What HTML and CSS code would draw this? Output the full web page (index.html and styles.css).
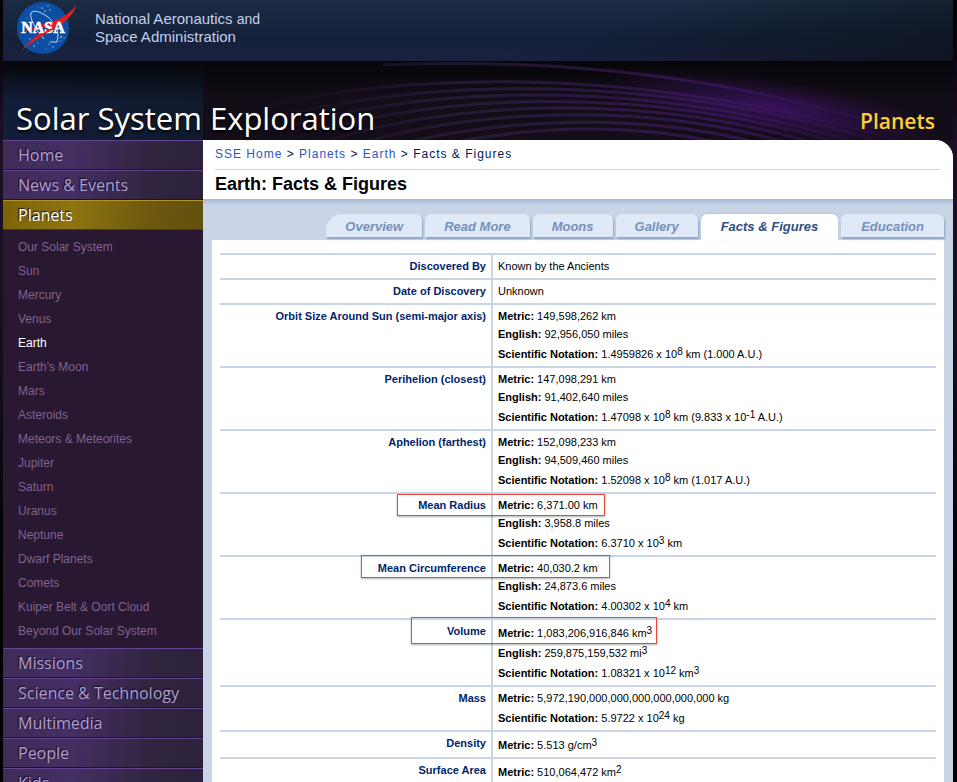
FILE: index.html
```html
<!DOCTYPE html>
<html lang="en">
<head>
  <meta charset="UTF-8">
  <title>Solar System Exploration: Planets: Earth: Facts &amp; Figures</title>
  <link rel="stylesheet" href="styles.css">
</head>
<body>
<div class="page">
  <header>
    <div class="agency">
      <svg class="logo" viewBox="0 0 64 54" role="img" aria-label="NASA logo">
        <circle cx="29" cy="28" r="26" fill="#0b4ea2"/>
        <g fill="#a9cdf0">
          <circle cx="28" cy="8" r=".8"/><circle cx="34" cy="6" r=".7"/><circle cx="31" cy="11" r=".8"/>
          <circle cx="36" cy="10" r=".7"/><circle cx="24" cy="7" r=".5"/><circle cx="13" cy="18" r=".6"/>
          <circle cx="16" cy="39" r=".7"/><circle cx="20" cy="46" r=".8"/><circle cx="24" cy="43" r=".6"/>
          <circle cx="35" cy="44" r=".7"/><circle cx="39" cy="47" r=".7"/><circle cx="47" cy="37" r=".9"/>
          <circle cx="50" cy="38" r=".6"/><circle cx="46" cy="41" r=".6"/><circle cx="32" cy="49" r=".5"/>
        </g>
        <path d="M30 39C22 30 15 18 17 13c2-4 10-1 17 4 7 6 12 14 9 25h-7" fill="none" stroke="#c3dcf4" stroke-width="1"/>
        <path d="M0 35.500C16 28 28 24 37 22 50 18 58 11 62.500 4.500 60 15 51 23 39 30 26 37 17 43 7 51 15 41 24 34 36 27 24 28 12 31 0 35.500z" fill="#e01b22"/>
        <text x="29" y="33" text-anchor="middle" class="logo-text">NASA</text>
        <path d="M18 42C25 36 32 32 40 28" fill="none" stroke="#e01b22" stroke-width="1.400"/>
      </svg>
      <p class="agency-name">National Aeronautics <small>and</small><br>Space Administration</p>
    </div>
    <div class="banner">
      <svg class="swirl" viewBox="0 0 750 79" preserveAspectRatio="none" aria-hidden="true">
        <defs>
          <linearGradient id="fade" gradientUnits="userSpaceOnUse" x1="40" y1="0" x2="730" y2="0">
            <stop offset="0" stop-color="#3a1c4c" stop-opacity="0"/>
            <stop offset=".3" stop-color="#3a2550" stop-opacity=".5"/>
            <stop offset=".7" stop-color="#3d1763" stop-opacity=".7"/>
            <stop offset="1" stop-color="#3a1458" stop-opacity="0"/>
          </linearGradient>
          <radialGradient id="glow">
            <stop offset="0" stop-color="#3d1266" stop-opacity=".8"/>
            <stop offset="1" stop-color="#3d1266" stop-opacity="0"/>
          </radialGradient>
        </defs>
        <ellipse cx="570" cy="46" rx="170" ry="28" fill="url(#glow)" transform="rotate(9 570 46)"/>
        <g fill="none" stroke="url(#fade)" stroke-width="3">
          <path d="M180 4C380-4 560 20 740 84"/>
          <path d="M0 62C160 10 420-4 720 86"/>
          <path d="M10 74C170 18 440 2 700 88"/>
          <path d="M40 80C190 24 440 10 680 90"/>
          <path d="M70 84C210 32 450 18 660 90"/>
          <path d="M100 88C230 40 450 26 635 90"/>
          <path d="M135 90C250 48 450 36 610 90"/>
          <path d="M170 90C280 58 440 46 585 90"/>
          <path d="M210 90C310 66 430 56 550 90"/>
        </g>
      </svg>
      <div class="site-title">Solar System Exploration</div>
      <div class="section-title">Planets</div>
    </div>
  </header>

  <div class="columns">
    <nav class="sidebar">
      <ul class="menu">
        <li><a href="#">Home</a></li>
        <li><a href="#">News &amp; Events</a></li>
        <li class="current"><a href="#">Planets</a>
          <ul class="submenu">
            <li><a href="#">Our Solar System</a></li>
            <li><a href="#">Sun</a></li>
            <li><a href="#">Mercury</a></li>
            <li><a href="#">Venus</a></li>
            <li><a href="#" class="active">Earth</a></li>
            <li><a href="#">Earth's Moon</a></li>
            <li><a href="#">Mars</a></li>
            <li><a href="#">Asteroids</a></li>
            <li><a href="#">Meteors &amp; Meteorites</a></li>
            <li><a href="#">Jupiter</a></li>
            <li><a href="#">Saturn</a></li>
            <li><a href="#">Uranus</a></li>
            <li><a href="#">Neptune</a></li>
            <li><a href="#">Dwarf Planets</a></li>
            <li><a href="#">Comets</a></li>
            <li><a href="#">Kuiper Belt &amp; Oort Cloud</a></li>
            <li><a href="#">Beyond Our Solar System</a></li>
          </ul>
        </li>
        <li><a href="#">Missions</a></li>
        <li><a href="#">Science &amp; Technology</a></li>
        <li><a href="#">Multimedia</a></li>
        <li><a href="#">People</a></li>
        <li><a href="#">Kids</a></li>
      </ul>
    </nav>

    <main>
      <div class="heading">
        <div class="breadcrumb"><a href="#">SSE Home</a> &gt; <a href="#">Planets</a> &gt; <a href="#">Earth</a> &gt; Facts &amp; Figures</div>
        <h1>Earth: Facts &amp; Figures</h1>
      </div>

      <nav class="tabs">
        <a href="#">Overview</a>
        <a href="#">Read More</a>
        <a href="#">Moons</a>
        <a href="#">Gallery</a>
        <a href="#" class="active">Facts &amp; Figures</a>
        <a href="#">Education</a>
      </nav>

      <div class="panel">
        <table class="facts">
          <tr><th scope="row">Discovered By</th><td>Known by the Ancients</td></tr>
          <tr><th scope="row">Date of Discovery</th><td>Unknown</td></tr>
          <tr>
            <th scope="row">Orbit Size Around Sun (semi-major axis)</th>
            <td><b>Metric:</b> 149,598,262 km<br><b>English:</b> 92,956,050 miles<br><b>Scientific Notation:</b> 1.4959826 x 10<sup>8</sup> km (1.000 A.U.)</td>
          </tr>
          <tr>
            <th scope="row">Perihelion (closest)</th>
            <td><b>Metric:</b> 147,098,291 km<br><b>English:</b> 91,402,640 miles<br><b>Scientific Notation:</b> 1.47098 x 10<sup>8</sup> km (9.833 x 10<sup>-1</sup> A.U.)</td>
          </tr>
          <tr>
            <th scope="row">Aphelion (farthest)</th>
            <td><b>Metric:</b> 152,098,233 km<br><b>English:</b> 94,509,460 miles<br><b>Scientific Notation:</b> 1.52098 x 10<sup>8</sup> km (1.017 A.U.)</td>
          </tr>
          <tr>
            <th scope="row">Mean Radius</th>
            <td><span class="mark mark-radius"></span><b>Metric:</b> 6,371.00 km<br><b>English:</b> 3,958.8 miles<br><b>Scientific Notation:</b> 6.3710 x 10<sup>3</sup> km</td>
          </tr>
          <tr>
            <th scope="row">Mean Circumference</th>
            <td><span class="mark mark-circumference"></span><b>Metric:</b> 40,030.2 km<br><b>English:</b> 24,873.6 miles<br><b>Scientific Notation:</b> 4.00302 x 10<sup>4</sup> km</td>
          </tr>
          <tr>
            <th scope="row">Volume</th>
            <td><span class="mark mark-volume"></span><b>Metric:</b> 1,083,206,916,846 km<sup>3</sup><br><b>English:</b> 259,875,159,532 mi<sup>3</sup><br><b>Scientific Notation:</b> 1.08321 x 10<sup>12</sup> km<sup>3</sup></td>
          </tr>
          <tr>
            <th scope="row">Mass</th>
            <td><b>Metric:</b> 5,972,190,000,000,000,000,000,000 kg<br><b>Scientific Notation:</b> 5.9722 x 10<sup>24</sup> kg</td>
          </tr>
          <tr><th scope="row">Density</th><td><b>Metric:</b> 5.513 g/cm<sup>3</sup></td></tr>
          <tr><th scope="row">Surface Area</th><td><b>Metric:</b> 510,064,472 km<sup>2</sup></td></tr>
        </table>
      </div>
    </main>
  </div>
</div>
</body>
</html>
```
FILE: styles.css
```css
* { box-sizing: border-box; }
body { margin: 0; background: #0a0610; font-family: "Liberation Sans", Arial, sans-serif; font-size: 12px; color: #000; }
a { text-decoration: none; }
ul { list-style: none; margin: 0; padding: 0; }

.page { height: 100vh; overflow: hidden; padding: 0 4px 0 3px; background: linear-gradient(#000, #1c0f26 140px, #1a0f22 300px, #000 600px); }

/* header */
.agency { display: flex; align-items: flex-start; height: 61px; padding-left: 11px; background: linear-gradient(165deg, rgba(0,0,0,0) 60%, rgba(12,16,26,.8)), linear-gradient(#1b2b42, #14213a 60%, #1a2140); }
.logo { width: 64px; height: 54px; }
.logo-text { font: bold 16px "Liberation Serif", serif; fill: #fff; stroke: #fff; stroke-width: .6px; }
.agency-name { margin: 10px 0 0 17px; font-size: 15px; line-height: 18px; color: #c3d0ee; }
.agency-name small { font-size: 14px; }
.banner { position: relative; display: flex; justify-content: space-between; align-items: flex-end; height: 79px; padding: 0 18px 0 13px; font-family: "Open Sans", sans-serif; background: linear-gradient(#060608, rgba(6,6,8,0) 40px), linear-gradient(90deg, #131d3a, #101a2c) 0 0 / 200px 100% no-repeat, #130d18; }
.swirl { position: absolute; top: 0; left: 200px; width: calc(100% - 200px); height: 79px; }
.site-title { position: relative; font-size: 31px; line-height: 44px; color: #fff; text-shadow: 0 2px 3px #000; }
.section-title { position: relative; font-size: 21px; line-height: 38px; font-weight: 600; color: #fdd02f; }

.columns { display: flex; align-items: stretch; }

/* left menu */
.sidebar { flex: 0 0 200px; background: #291831; }
.menu > li > a { display: block; height: 30px; padding-left: 15px; border-top: 1px solid #644690; border-bottom: 1px solid #1d1228; background: linear-gradient(100deg, #3f2c59, #432f62 35%, #30243f 75%, #2c213b); font: 500 16px/28px "Open Sans", sans-serif; color: #b09dcd; text-shadow: -1px -1px 1px #150d22; }
.menu > .current > a { border-top-color: #b3922a; border-bottom-color: #4c3d09; background: linear-gradient(100deg, #7c6409, #8f7411 35%, #6b570e 75%, #62500f); color: #fff; }
.submenu { padding: 5px 0; }
.submenu a { display: block; padding-left: 15px; line-height: 24px; color: #7e648e; }
.submenu .active { color: #fff; }

/* content */
main { flex: 1; min-width: 0; background: #c9d4e6; border-top-right-radius: 18px; }
.heading { height: 59px; padding: 0 12px; background: #fff; border-top-right-radius: 18px; }
.breadcrumb { height: 30px; border-bottom: 1px solid #c9d4e6; line-height: 28px; letter-spacing: 1px; color: #00175a; }
.breadcrumb a { color: #2d55c0; }
h1 { margin: 0; font-size: 18px; line-height: 28px; }

.tabs { display: flex; justify-content: flex-end; gap: 3px; height: 41px; padding: 15px 9px 0; background: linear-gradient(#a8b8d3, #b2c0d9 2px, #c9d4e6 6px); }
.tabs a { height: 23px; padding: 0 19px; border-radius: 6px 6px 0 0; background: #dfe9f8; box-shadow: 1px 2px 2px #8fa3c6; font-size: 13px; line-height: 25px; font-weight: bold; font-style: italic; color: #7790b8; white-space: nowrap; }
.tabs a:first-child { border-top-left-radius: 16px; }
.tabs a:last-child { padding: 0 20px; }
.tabs .active { height: 26px; padding: 0 20px; background: #fff; box-shadow: 0 -1px 2px #b3c2da; color: #324d85; }

.panel { margin: 0 9px; padding: 13px 8px 20px; background: #fff; }
.facts { width: 100%; border-collapse: separate; border-spacing: 0; font-size: 11px; line-height: 18px; }
.facts th, .facts td { border-top: 2px solid #c9d4e6; padding: 2px 5px 3px; vertical-align: top; }
.facts th { width: 271px; text-align: right; color: #001f6b; }
.facts td { position: relative; border-left: 2px solid #c9d4e6; }
sup { font-size: 10px; line-height: 17px; vertical-align: 3px; }

/* boxes drawn over the rows */
.mark { position: absolute; border: 1px solid #e8493f; box-shadow: 0 1px 2px rgba(0,0,0,.3); }
.mark-radius { top: 0; left: -96px; width: 208px; height: 22px; }
.mark-circumference { top: -2px; left: -132px; width: 249px; height: 23px; }
.mark-volume { top: -3px; left: -82px; width: 246px; height: 27px; }
```
